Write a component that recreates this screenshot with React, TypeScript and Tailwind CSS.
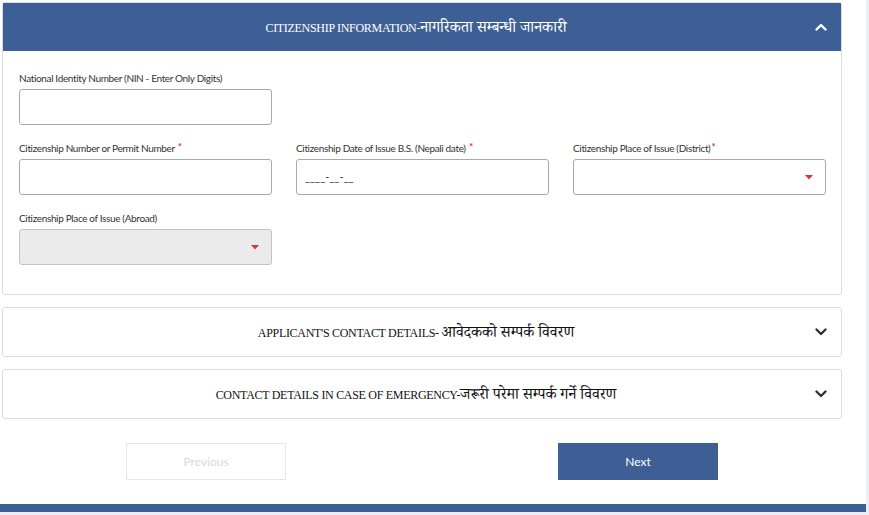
import React from "react";

const serif = { fontFamily: '"Liberation Serif", "Noto Serif Devanagari", "Noto Sans Devanagari", serif' };

function ChevronUp({ className }: { className?: string }) {
  return (
    <svg width="12" height="8" viewBox="0 0 12 8" className={className}>
      <polyline points="1.5,6.5 6,2 10.5,6.5" fill="none" stroke="currentColor" strokeWidth="2.4" strokeLinecap="round" strokeLinejoin="round" />
    </svg>
  );
}

function ChevronDown({ className }: { className?: string }) {
  return (
    <svg width="12" height="8" viewBox="0 0 12 8" className={className}>
      <polyline points="1.5,1.5 6,6 10.5,1.5" fill="none" stroke="currentColor" strokeWidth="2.4" strokeLinecap="round" strokeLinejoin="round" />
    </svg>
  );
}

function Caret() {
  return (
    <svg width="8" height="5" viewBox="0 0 8 5">
      <polygon points="0,0 8,0 4,4.5" fill="#d9363e" />
    </svg>
  );
}

function Label({ text, req }: { text: string; req?: boolean }) {
  return (
    <div className="h-[14px] leading-[14px] mb-[4px] text-[10px] tracking-[-0.35px] text-[#333] whitespace-nowrap" style={{ fontFamily: "Lato, sans-serif" }}>
      {text}
      {req && <span className="text-[#d9363e] text-[10px] font-bold relative top-[-2px] ml-[1px]">*</span>}
    </div>
  );
}

function TextInput({ value }: { value?: string }) {
  return (
    <div className="h-[36px] w-full rounded-[3px] border border-[#a9a9a9] bg-white flex items-center px-[8px] text-[11px] text-[#333]" style={{ fontFamily: "Lato, sans-serif" }}>
      {value}
    </div>
  );
}

function SelectInput({ disabled }: { disabled?: boolean }) {
  return (
    <div className={"h-[36px] w-full rounded-[3px] border border-[#a9a9a9] flex items-center justify-end pr-[12px] " + (disabled ? "bg-[#ebebeb] border-[#c4c4c4]" : "bg-white")}>
      <Caret />
    </div>
  );
}

function Title({ latin, deva, className }: { latin: string; deva: string; className: string }) {
  return (
    <div className={"flex-1 text-center pr-[12px] leading-[16px] " + className} style={serif}>
      <span className="text-[12px] tracking-[-0.3px]">{latin}</span>
      <span className="text-[15.5px]">{deva}</span>
    </div>
  );
}

function CollapsedPanel({ latin, deva }: { latin: string; deva: string }) {
  return (
    <div className="h-[50px] rounded-[3px] border border-[#dcdcdc] bg-white flex items-center relative mt-[12px]">
      <Title latin={latin} deva={deva} className="text-[#111]" />
      <ChevronDown className="absolute right-[14px] top-[20px] text-[#333]" />
    </div>
  );
}

export default function App() {
  return (
    <div className="w-[869px] h-[515px] bg-white flex overflow-hidden">
      <div className="w-[866px] flex flex-col">
        <div className="pl-[2px] pr-[24px] pt-[2px] flex flex-col">
          <div className="border border-[#dcdcdc] rounded-[3px] bg-white">
            <div className="h-[48px] bg-[#3d5f96] flex items-center relative">
              <Title latin="CITIZENSHIP INFORMATION-" deva="नागरिकता सम्बन्धी जानकारी" className="text-white" />
              <ChevronUp className="absolute right-[14px] top-[20px] text-white" />
            </div>
            <div className="pt-[20px] pb-[29px] pl-[16px]">
              <div className="grid grid-cols-[253px_253px_253px] gap-x-6 gap-y-[16px]">
                <div>
                  <Label text="National Identity Number (NIN - Enter Only Digits)" />
                  <TextInput />
                </div>
                <div />
                <div />
                <div>
                  <Label text="Citizenship Number or Permit Number " req />
                  <TextInput />
                </div>
                <div>
                  <Label text="Citizenship Date of Issue B.S. (Nepali date) " req />
                  <TextInput value="____-__-__" />
                </div>
                <div>
                  <Label text="Citizenship Place of Issue (District)" req />
                  <SelectInput />
                </div>
                <div>
                  <Label text="Citizenship Place of Issue (Abroad)" />
                  <SelectInput disabled />
                </div>
              </div>
            </div>
          </div>
          <CollapsedPanel latin="APPLICANT'S CONTACT DETAILS- " deva="आवेदकको सम्पर्क विवरण" />
          <CollapsedPanel latin="CONTACT DETAILS IN CASE OF EMERGENCY-" deva="जरूरी परेमा सम्पर्क गर्ने विवरण" />
        </div>
        <div className="flex mt-[24px] pl-[126px] gap-[272px]">
          <button className="w-[160px] h-[37px] border border-[#e6e6e6] bg-white text-[12px] text-[#d8d8d8]" style={{ fontFamily: "Lato, sans-serif" }}>
            Previous
          </button>
          <button className="w-[160px] h-[37px] bg-[#3d5f96] text-[12px] text-white" style={{ fontFamily: "Lato, sans-serif" }}>
            Next
          </button>
        </div>
        <div className="mt-[24px] h-[8px] bg-[#3d5f96]" />
        <div className="flex-1 bg-[#eceef3]" />
      </div>
      <div className="w-[3px] bg-[#eceef3]" />
    </div>
  );
}
